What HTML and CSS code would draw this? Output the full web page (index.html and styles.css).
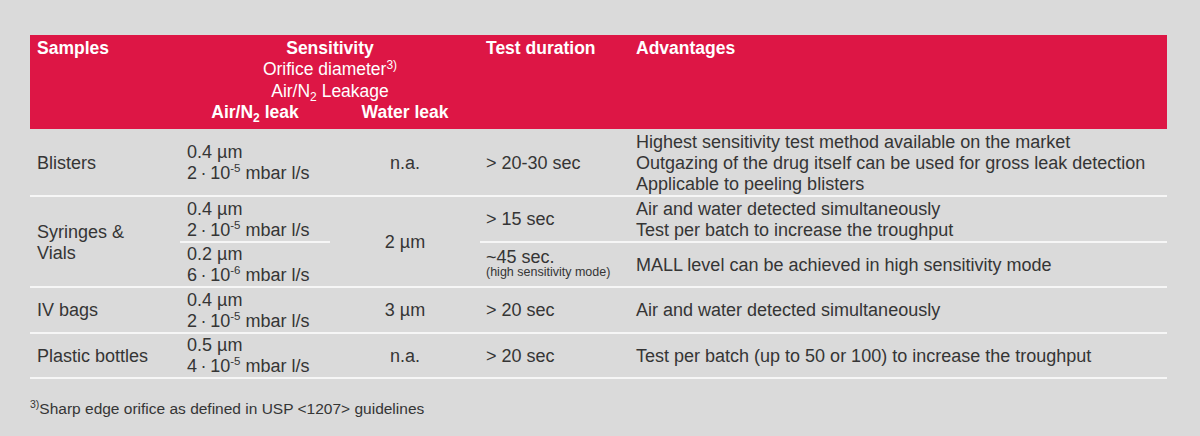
FILE: index.html
```html
<!DOCTYPE html>
<html>
<head>
<meta charset="utf-8">
<link rel="stylesheet" href="styles.css">
</head>
<body>
<div class="page">
<table class="leak">
  <colgroup>
    <col class="c-samples">
    <col class="c-air">
    <col class="c-water">
    <col class="c-test">
    <col class="c-adv">
  </colgroup>
  <thead>
    <tr class="h1">
      <th rowspan="2" class="left">Samples</th>
      <th colspan="2" class="center">
        <div class="b">Sensitivity</div>
        <div class="r">Orifice diameter<sup>3)</sup></div>
        <div class="r">Air/N<sub>2</sub> Leakage</div>
      </th>
      <th rowspan="2" class="left tdur">Test duration</th>
      <th rowspan="2" class="left tadv">Advantages</th>
    </tr>
    <tr class="h2">
      <th class="center">Air/N<sub>2</sub> leak</th>
      <th class="center">Water leak</th>
    </tr>
  </thead>
  <tbody>
    <tr class="first">
      <td class="samp">Blisters</td>
      <td class="air">0.4 µm<br>2&#8201;·&#8201;10<sup>-5</sup> mbar l/s</td>
      <td class="water">n.a.</td>
      <td class="test">&gt; 20-30 sec</td>
      <td class="adv">Highest sensitivity test method available on the market<br>Outgazing of the drug itself can be used for gross leak detection<br>Applicable to peeling blisters</td>
    </tr>
    <tr>
      <td class="samp" rowspan="2">Syringes &amp;<br>Vials</td>
      <td class="air">0.4 µm<br>2&#8201;·&#8201;10<sup>-5</sup> mbar l/s</td>
      <td class="water" rowspan="2">2 µm</td>
      <td class="test">&gt; 15 sec</td>
      <td class="adv">Air and water detected simultaneously<br>Test per batch to increase the troughput</td>
    </tr>
    <tr>
      <td class="air">0.2 µm<br>6&#8201;·&#8201;10<sup>-6</sup> mbar l/s</td>
      <td class="test"><div class="t45">~45 sec.</div><div class="small">(high sensitivity mode)</div></td>
      <td class="adv">MALL level can be achieved in high sensitivity mode</td>
    </tr>
    <tr>
      <td class="samp">IV bags</td>
      <td class="air">0.4 µm<br>2&#8201;·&#8201;10<sup>-5</sup> mbar l/s</td>
      <td class="water">3 µm</td>
      <td class="test">&gt; 20 sec</td>
      <td class="adv">Air and water detected simultaneously</td>
    </tr>
    <tr>
      <td class="samp">Plastic bottles</td>
      <td class="air">0.5 µm<br>4&#8201;·&#8201;10<sup>-5</sup> mbar l/s</td>
      <td class="water">n.a.</td>
      <td class="test">&gt; 20 sec</td>
      <td class="adv">Test per batch (up to 50 or 100) to increase the troughput</td>
    </tr>
  </tbody>
</table>
<p class="foot"><sup>3)</sup>Sharp edge orifice as defined in USP &lt;1207&gt; guidelines</p>
</div>
</body>
</html>
```
FILE: styles.css
```css
html, body {
  margin: 0;
  padding: 0;
  background: #dadada;
}
body {
  font-family: "Liberation Sans", Arial, sans-serif;
  color: #353535;
}
.page {
  padding: 35px 0 0 30px;
}
.leak {
  border-collapse: collapse;
  table-layout: fixed;
  width: 1137px;
}
.c-samples { width: 150px; }
.c-air { width: 150px; }
.c-water { width: 150px; }
.c-test { width: 150px; }
.c-adv { width: 537px; }

.leak thead th {
  background: #dd1645;
  color: #ffffff;
  font-size: 17.5px;
  line-height: 21.6px;
  font-weight: bold;
  vertical-align: top;
  padding: 0;
}
.leak thead .h1 th { padding-top: 2.5px; }
.leak thead .h2 th { padding-bottom: 5.5px; }
.leak thead th.left { text-align: left; padding-left: 7px; }
.leak thead th.tdur, .leak thead th.tadv { padding-left: 6px; }
.leak thead th.center { text-align: center; }
.leak thead .r {
  font-weight: normal;
  font-size: 17.5px;
}
.leak sub {
  font-size: 12px;
  line-height: 0;
  vertical-align: -4px;
}
.leak sup, .foot sup {
  font-size: 11.5px;
  line-height: 0;
  vertical-align: 7px;
}
.leak thead sup { vertical-align: 6px; font-size: 12px; }

.leak tbody td {
  font-size: 18px;
  line-height: 21px;
  padding: 1.5px 6px 0 6px;
  vertical-align: middle;
  border-bottom: 2px solid #f6f6f6;
}
.leak tbody tr.first td { padding-top: 2.5px; padding-bottom: 0.5px; }
.leak tbody td.samp { padding-left: 7px; }
.leak tbody td.air { padding-left: 7px; }
.leak tbody td.water { text-align: center; }
.t45 { line-height: 19px; }
.small {
  font-size: 12.5px;
  line-height: 11px;
  padding-bottom: 4px;
}
.foot {
  margin: 21px 0 0 0;
  font-size: 15.5px;
  line-height: 18px;
}
.foot sup { font-size: 10.5px; vertical-align: 6px; }
```
